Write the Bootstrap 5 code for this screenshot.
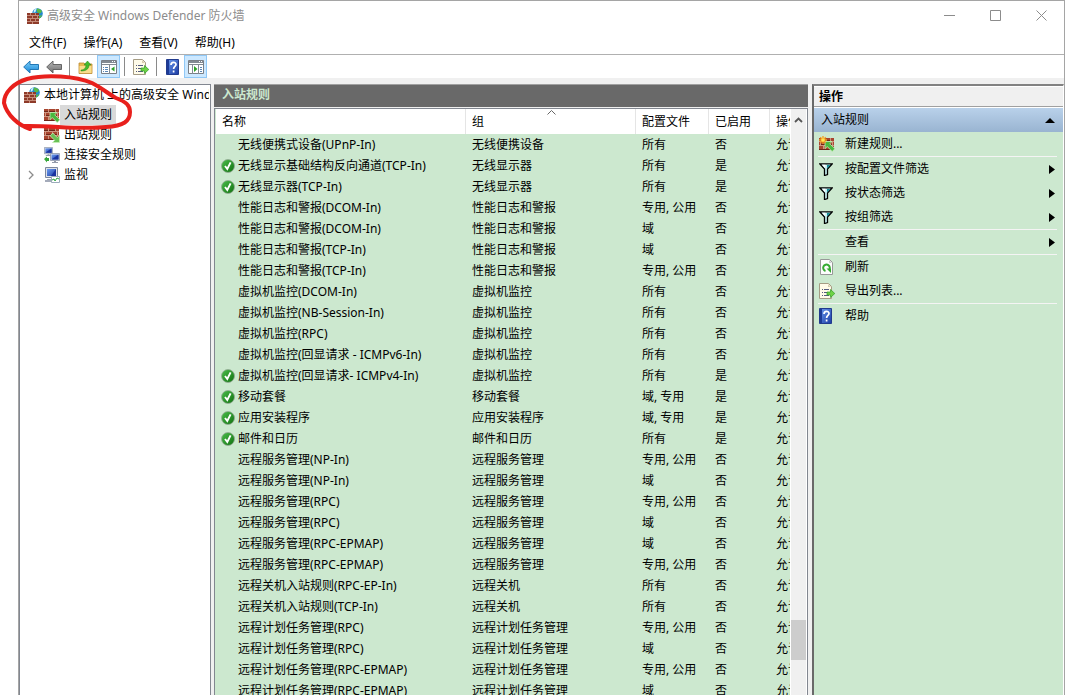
<!DOCTYPE html>
<html lang="zh-CN">
<head>
<meta charset="utf-8">
<meta name="viewport" content="width=device-width, initial-scale=1">
<title>高级安全 Windows Defender 防火墙</title>
<link href="https://cdn.jsdelivr.net/npm/bootstrap@5.3.0/dist/css/bootstrap.min.css" rel="stylesheet">
<style>
body{font:12px/20px "Noto Sans","Noto Sans CJK SC",sans-serif;color:#000;background:#fff}
button{font:inherit;color:inherit;background:none;border:0;padding:0;text-align:left}
svg{flex:none;display:block}
.app-window{margin:0 1px 0 18px;border:1px solid #a5a5a5;border-bottom:0;background:#f0f0f0}
.title-bar{height:30px;background:#fff;color:#8c8c8c}
.title-bar button{width:46px;height:28px}
.menu-row{height:25px;background:#fff;border-bottom:1px solid #b0b0b0;gap:17px;padding:0 10px}
.tool-row{height:23px;background:#fff}
.tool-row button{width:23px;height:23px}
.tool-row .is-on{background:#cce8ff;border:1px solid #90c8f6}
.tool-sep{width:1px;height:19px;background:#8a8a8a}
.panes{margin-top:6px;gap:3px}
.tree-pane{width:192px;background:#fff;border:1px solid #828790;border-bottom:0;overflow:hidden;padding-right:1px}
.tree-pane button{height:20px;white-space:nowrap}
.tree-pane .picked{background:#d9d9d9}
.pane-head{height:23px;background:#696969;color:#cce8cf;border-top:1px solid #a0a0a0}
.list-box{margin-top:1px;border:1px solid #828790;border-width:1px 1px 0;background:#cce8cf;padding-left:1px}
.rules{table-layout:fixed;width:100%;border-collapse:separate;border-spacing:0}
.rules th{height:25px;font-weight:400;background:#fff;border-right:1px solid #e5e5e5;position:relative}
.rules th:last-child{border-right:0}
.rules td{height:21px;line-height:21px}
.rules th,.rules td{padding:0 0 0 6px;overflow:hidden;white-space:nowrap}
.rules td:first-child{padding-left:5px}
.c-group{width:170px}.c-profile{width:73px}.c-enabled{width:61px}.c-action{width:20px}
.sort-mark{position:absolute;top:1px;left:81px}
.mark-box{width:17px;flex:none}
.scroll-track{width:17px;background:#f0f0f0;border-left:1px solid #fff;border-right:1px solid #fff}
.scroll-thumb{height:40px;background:#cdcdcd;margin-bottom:35px}
.act-pane{width:252px;margin-left:1px;border-left:2px solid #696969;border-top:2px solid #828282;border-right:1px solid #fff;background:#cce8cf}
.act-title{height:21px;background:#f0f0f0;border-bottom:1px solid #a0a0a0;font-weight:700;padding-left:5px;border-top:1px solid #fff}
.act-group{height:25px;background:linear-gradient(#b9d1ea,#99b4d1);padding:0 8px 0 7px;border-top:1px solid #fff}
.act-list{padding:0 6px 0 4px}
.act-list button{height:24px;width:100%;gap:10px;padding:0 2px 0 1px}
.act-list hr{margin:0;border:0;border-top:1px solid #f4f4f4;opacity:1}
.act-icon{width:16px;flex:none}
.red-loop{left:0;top:71px;pointer-events:none}
</style>
<script src="https://cdn.jsdelivr.net/npm/bootstrap@5.3.0/dist/js/bootstrap.bundle.min.js"></script>
</head>
<body class="position-relative overflow-hidden">
<svg width="0" height="0" class="position-absolute" aria-hidden="true">
<defs>
<linearGradient id="gBlue" x1="0" y1="0" x2="1" y2="1"><stop stop-color="#6c9cf0"/><stop offset="1" stop-color="#1c3ca4"/></linearGradient>
<linearGradient id="gGreen" x1="0" y1="0" x2="1" y2="1"><stop stop-color="#4cbf4c"/><stop offset="1" stop-color="#0f6f0f"/></linearGradient>
<linearGradient id="gSky" x1="0" y1="0" x2="0" y2="1"><stop stop-color="#7fd0f8"/><stop offset="1" stop-color="#1585d8"/></linearGradient>
<linearGradient id="gGrey" x1="0" y1="0" x2="0" y2="1"><stop stop-color="#b8b8b8"/><stop offset="1" stop-color="#6e6e6e"/></linearGradient>
<symbol id="bricks" viewBox="0 0 15 12"><path fill="#a8452f" d="M0 0h15v12H0z"/><path stroke="#cf9580" fill="none" d="M0 3.5h15M0 7.5h15M4.500 0v3M11.500 0v3M1.500 4v3M8.500 4v3M13.500 4v3M4.500 8v4M11.500 8v4"/><path stroke="#6e2618" fill="none" d="M0 2.500h4M5 2.500h6M2 6.500h6M9 6.500h4M0 11.500h15"/></symbol>
<symbol id="wall" viewBox="0 0 16 16"><circle cx="10.500" cy="5.500" r="5.300" fill="#2187cf"/><path fill="#58b947" d="M10 .6c2 0 4 1 5 2.600-1 1-1 2.600-2.600 2.300C11 5 9 4 10 .6zM12 8l3-1c-.4 1.600-1.500 3-3 3.500z"/><path fill="#c8eefa" d="M7 2c1-.9 2-1.300 2.600-1.200L8.500 4 6.500 5z"/><g transform="translate(0 5)"><path fill="#8e3a29" d="M0 0h12v11H0z"/><path stroke="#c48a78" fill="none" d="M0 2.500h12M0 5.500h12M0 8.500h12M3.500 0v2M8.500 0v2M5.500 3v2M10.500 3v2M3.500 6v2M8.500 6v2M5.500 9v2"/></g></symbol>
<symbol id="inbound" viewBox="0 0 16 16"><use href="#bricks" y="2" width="15" height="12"/><path fill="#49b83e" stroke="#c5efb6" stroke-width=".8" d="M6 5.500h7l-2.200 2.200 5 5-2.600 2.800-5-5L6 12.800z"/></symbol>
<symbol id="outbound" viewBox="0 0 16 16"><use href="#bricks" y="1" width="15" height="12"/><path fill="#69c155" stroke="#c5efb6" stroke-width=".8" d="M15.500 15.500h-7l2.200-2.200-4.500-4.500L8.800 6l4.500 4.500 2.200-2.200z"/></symbol>
<symbol id="newrule" viewBox="0 0 16 16"><use href="#inbound"/><path stroke="#f5a01c" stroke-width="1.300" d="M4 0v8M0 4h8M1.200 1.200l5.600 5.600M6.800 1.200L1.200 6.800"/><circle cx="4" cy="4" r="1.800" fill="#ffe458"/></symbol>
<symbol id="screen" viewBox="0 0 10 10"><path fill="#dde1ea" stroke="#7d879d" stroke-width=".7" d="M.5.5h9v7h-9z"/><path fill="url(#gBlue)" d="M1.500 1.500h7v5h-7z"/><path fill="#1933a0" d="M8.500 1.500v5h-7z"/><path fill="#939aaa" d="M4 8h2v1h2v1H2V9h2z"/></symbol>
<symbol id="connsec" viewBox="0 0 16 16"><use href="#screen" width="9" height="9"/><use href="#screen" x="6" y="6" width="10" height="10"/><path fill="#37a83a" d="M0 12l3-2.500V11h2v3H3v1.500z"/></symbol>
<symbol id="monitor" viewBox="0 0 16 16"><path fill="#dde1ea" stroke="#7d879d" d="M1.500.5h12v10h-12z"/><path fill="url(#gBlue)" d="M3 2h9v7H3z"/><path fill="#1933a0" d="M12 2v7H7z"/><path fill="#a4abba" d="M3 12h7v1h2v2H1v-2h2z"/><path fill="#fff" stroke="#9babbb" d="M7.500 9.500h8v6h-8z"/><path fill="none" stroke="#2ca83e" d="M8 13l2-1 1 2 2-3 2 1"/></symbol>
<symbol id="check" viewBox="0 0 14 14"><circle cx="7" cy="7" r="6.500" fill="url(#gGreen)" stroke="#95a995" stroke-width=".8"/><path fill="none" stroke="#fff" stroke-width="1.900" d="M4 7l2.300 3L9.600 3.300"/></symbol>
<symbol id="arrow" viewBox="0 0 16 14"><path stroke-width="1" d="M.7 7L7 1v3.500h8.500v5H7V13z"/></symbol>
<symbol id="folder" viewBox="0 0 16 16"><path fill="#e9b94f" stroke="#bd8c34" stroke-width=".8" d="M1 4h5l1 1h7v9.500H1z"/><path fill="#f9dd8d" d="M1.500 7h12v7h-12z"/><path fill="#45bb2c" stroke="#278218" stroke-width=".5" d="M3 11c3 0 5-2 5-5H6l3.500-4L13 6h-2c0 4-3 6-8 6z"/></symbol>
<symbol id="pane" viewBox="0 0 16 14"><path fill="#fff" stroke="#7a7f86" d="M.5.5h15v13H.5z"/><path fill="#838a92" d="M1 1h14v2H1zM1 4h14v1H1zM8 5h1v9H8z"/><path fill="#fff" d="M11 1h1v1h-1zM13 1h1v1h-1z"/><path stroke="#5b87b5" d="M2 7.500h1M4 7.500h3M2 9.500h1M4 9.500h3M2 11.500h1M4 11.500h3"/><path fill="#2da128" d="M13.500 6.500v5L10 9z"/></symbol>
<symbol id="pane2" viewBox="0 0 16 14"><path fill="#fff" stroke="#7a7f86" d="M.5.5h15v13H.5z"/><path fill="#838a92" d="M1 1h14v2H1zM1 4h14v1H1zM10 5h1v9h-1zM4 5h1v9H4z"/><path fill="#fff" d="M11 1h1v1h-1zM13 1h1v1h-1z"/><path stroke="#5b87b5" d="M12 7.500h2M12 9.500h2M12 11.500h2"/><path fill="#2da128" d="M6 6v6l3.500-3z"/></symbol>
<symbol id="export" viewBox="0 0 16 16"><path fill="#fffbe8" stroke="#a59c84" d="M.5.5h9l3 3v12H.5z"/><path fill="#d7cdaf" d="M9 1v3h3z"/><path stroke="#555b80" d="M3 6.500h1M5 6.500h5M3 9.500h1M5 9.500h4M3 12.500h1M5 12.500h5"/><path fill="#6ed346" stroke="#2f9c26" stroke-width=".7" d="M8 9h3.500V6.500l4.300 4-4.300 4V12H8z"/></symbol>
<symbol id="help" viewBox="0 0 13 16"><path fill="url(#gBlue)" stroke="#223b8e" d="M.5.5h12v15H.5z"/><path fill="#1d3b96" d="M1 1h2v14H1z"/><path fill="none" stroke="#fff" stroke-width="1.700" d="M5 6c0-3.500 5-3.500 5-.5C10 7.500 7.600 7.500 7.600 10M7.600 11.500v2"/></symbol>
<symbol id="funnel" viewBox="0 0 14 13"><path fill="#c8f1f3" stroke="#000" stroke-width="1.300" d="M.8.8h12.400L8.500 6v5.500l-3 1V6z"/><path fill="#168d98" d="M8 2h3.500L8 5.500z"/><path fill="#fff" d="M3 1.700h3.500L6 5z"/></symbol>
<symbol id="refresh" viewBox="0 0 13 16"><path fill="#fcfcfc" stroke="#989898" d="M.5.5h9l3 3v12H.5z"/><path fill="#ccc" d="M9 1v3h3z"/><path fill="none" stroke="#35aa31" stroke-width="2" d="M5.500 12A3.300 3.300 0 1 1 9 11"/><path fill="#35aa31" d="M6.500 9.500H11V14z"/></symbol>
</defs></svg>

<div class="app-window vh-100 d-flex flex-column overflow-hidden">
  <header class="title-bar d-flex align-items-center ps-2">
    <svg width="16" height="16"><use href="#wall"/></svg><span class="ms-1 me-auto">高级安全 Windows Defender 防火墙</span>
    <button class="d-flex align-items-center justify-content-center" aria-label="最小化"><svg width="11" height="11"><path stroke="#8c8c8c" d="M0 5.500h11"/></svg></button>
    <button class="d-flex align-items-center justify-content-center" aria-label="最大化"><svg width="11" height="11"><path fill="none" stroke="#8c8c8c" d="M.5.5h10v10H.5z"/></svg></button>
    <button class="d-flex align-items-center justify-content-center" aria-label="关闭"><svg width="11" height="11"><path stroke="#8c8c8c" d="M.5.5l10 10M10.500.5l-10 10"/></svg></button>
  </header>
  <nav class="menu-row d-flex align-items-center">
    <button>文件(F)</button><button>操作(A)</button><button>查看(V)</button><button>帮助(H)</button>
  </nav>
  <div class="tool-row d-flex align-items-center ps-0" role="toolbar">
    <button class="d-flex align-items-center justify-content-center" aria-label="后退"><svg width="16" height="14" fill="url(#gSky)" stroke="#2377b5"><use href="#arrow"/></svg></button>
    <button class="d-flex align-items-center justify-content-center" aria-label="前进"><svg width="16" height="14" fill="url(#gGrey)" stroke="#656565"><use href="#arrow"/></svg></button>
    <span class="tool-sep mx-1"></span>
    <button class="d-flex align-items-center justify-content-center" aria-label="上移一级"><svg width="16" height="16"><use href="#folder"/></svg></button>
    <button class="is-on d-flex align-items-center justify-content-center" aria-label="显示控制台树"><svg width="16" height="14"><use href="#pane"/></svg></button>
    <span class="tool-sep mx-1"></span>
    <button class="d-flex align-items-center justify-content-center" aria-label="导出列表"><svg width="16" height="16"><use href="#export"/></svg></button>
    <span class="tool-sep ms-1"></span>
    <button class="d-flex align-items-center justify-content-center ms-1" aria-label="帮助"><svg width="13" height="16"><use href="#help"/></svg></button>
    <button class="is-on d-flex align-items-center justify-content-center" aria-label="显示操作窗格"><svg width="16" height="14"><use href="#pane2"/></svg></button>
  </div>

  <div class="panes d-flex flex-grow-1 overflow-hidden">
    <nav class="tree-pane flex-shrink-0 d-flex flex-column">
      <button class="d-flex align-items-center gap-1 ps-1"><svg width="16" height="16"><use href="#wall"/></svg><span class="overflow-hidden">本地计算机 上的高级安全 Wind</span></button>
      <button class="d-flex align-items-center ps-4"><svg width="16" height="16"><use href="#inbound"/></svg><span class="picked px-1">入站规则</span></button>
      <button class="d-flex align-items-center ps-4"><svg width="16" height="16"><use href="#outbound"/></svg><span class="px-1">出站规则</span></button>
      <button class="d-flex align-items-center ps-4"><svg width="16" height="16"><use href="#connsec"/></svg><span class="px-1">连接安全规则</span></button>
      <button class="d-flex align-items-center ps-2"><svg width="16" height="10"><path fill="none" stroke="#8c8c8c" stroke-width="1.300" d="M1 1l4 4-4 4"/></svg><svg width="16" height="16"><use href="#monitor"/></svg><span class="px-1">监视</span></button>
    </nav>

    <main class="flex-grow-1 d-flex flex-column overflow-hidden">
      <div class="pane-head ps-2 fw-bold">入站规则</div>
      <div class="list-box d-flex flex-grow-1 overflow-hidden">
        <div class="flex-grow-1 overflow-hidden">
          <table class="rules">
            <colgroup><col><col class="c-group"><col class="c-profile"><col class="c-enabled"><col class="c-action"></colgroup>
            <thead><tr><th>名称</th><th>组<svg class="sort-mark" width="9" height="5"><path fill="none" stroke="#666" d="M.5 4.500l4-4 4 4"/></svg></th><th>配置文件</th><th>已启用</th><th>操作</th></tr></thead>
            <tbody id="ruleRows"></tbody>
          </table>
        </div>
        <div class="scroll-track d-flex flex-column justify-content-between flex-shrink-0">
          <svg class="mx-auto mt-2" width="9" height="6"><path fill="none" stroke="#555" stroke-width="1.800" d="M1 5l3.500-3.500L8 5"/></svg>
          <div class="scroll-thumb"></div>
        </div>
      </div>
    </main>

    <aside class="act-pane flex-shrink-0">
      <div class="act-title">操作</div>
      <div class="act-group d-flex align-items-center justify-content-between"><span>入站规则</span><svg width="10" height="5"><path d="M0 5l5-5 5 5z"/></svg></div>
      <div class="act-list">
        <button class="d-flex align-items-center"><span class="act-icon"><svg width="16" height="16"><use href="#newrule"/></svg></span>新建规则...</button>
        <hr>
        <button class="d-flex align-items-center"><span class="act-icon"><svg width="14" height="13"><use href="#funnel"/></svg></span><span class="me-auto">按配置文件筛选</span><svg width="6" height="9"><path d="M0 0l6 4.500L0 9z"/></svg></button>
        <button class="d-flex align-items-center"><span class="act-icon"><svg width="14" height="13"><use href="#funnel"/></svg></span><span class="me-auto">按状态筛选</span><svg width="6" height="9"><path d="M0 0l6 4.500L0 9z"/></svg></button>
        <button class="d-flex align-items-center"><span class="act-icon"><svg width="14" height="13"><use href="#funnel"/></svg></span><span class="me-auto">按组筛选</span><svg width="6" height="9"><path d="M0 0l6 4.500L0 9z"/></svg></button>
        <hr>
        <button class="d-flex align-items-center"><span class="act-icon"></span><span class="me-auto">查看</span><svg width="6" height="9"><path d="M0 0l6 4.500L0 9z"/></svg></button>
        <hr>
        <button class="d-flex align-items-center"><span class="act-icon"><svg width="15" height="16"><use href="#refresh"/></svg></span>刷新</button>
        <button class="d-flex align-items-center"><span class="act-icon"><svg width="16" height="16"><use href="#export"/></svg></span>导出列表...</button>
        <hr>
        <button class="d-flex align-items-center"><span class="act-icon"><svg width="13" height="16"><use href="#help"/></svg></span>帮助</button>
      </div>
    </aside>
  </div>
</div>

<!-- hand-drawn loop around the inbound rules node -->
<svg class="red-loop position-absolute" width="140" height="65" viewBox="0 70 140 65"><path fill="none" stroke="#e8201c" stroke-width="4" stroke-linecap="round" stroke-linejoin="round" d="M30 128C18 124 7 114 4 102C4 91 14 82 27 78C46 73 76 75 92 82C104 88 108 93 116 97C126 101 130 104 130 111C130 120 124 125 106 126C78 129 50 124 23 125"/></svg>

<script>
const rules = [
  ["无线便携式设备(UPnP-In)","无线便携设备","所有",0],
  ["无线显示基础结构反向通道(TCP-In)","无线显示器","所有",1],
  ["无线显示器(TCP-In)","无线显示器","所有",1],
  ["性能日志和警报(DCOM-In)","性能日志和警报","专用, 公用",0],
  ["性能日志和警报(DCOM-In)","性能日志和警报","域",0],
  ["性能日志和警报(TCP-In)","性能日志和警报","域",0],
  ["性能日志和警报(TCP-In)","性能日志和警报","专用, 公用",0],
  ["虚拟机监控(DCOM-In)","虚拟机监控","所有",0],
  ["虚拟机监控(NB-Session-In)","虚拟机监控","所有",0],
  ["虚拟机监控(RPC)","虚拟机监控","所有",0],
  ["虚拟机监控(回显请求 - ICMPv6-In)","虚拟机监控","所有",0],
  ["虚拟机监控(回显请求- ICMPv4-In)","虚拟机监控","所有",1],
  ["移动套餐","移动套餐","域, 专用",1],
  ["应用安装程序","应用安装程序","域, 专用",1],
  ["邮件和日历","邮件和日历","所有",1],
  ["远程服务管理(NP-In)","远程服务管理","专用, 公用",0],
  ["远程服务管理(NP-In)","远程服务管理","域",0],
  ["远程服务管理(RPC)","远程服务管理","专用, 公用",0],
  ["远程服务管理(RPC)","远程服务管理","域",0],
  ["远程服务管理(RPC-EPMAP)","远程服务管理","域",0],
  ["远程服务管理(RPC-EPMAP)","远程服务管理","专用, 公用",0],
  ["远程关机入站规则(RPC-EP-In)","远程关机","所有",0],
  ["远程关机入站规则(TCP-In)","远程关机","所有",0],
  ["远程计划任务管理(RPC)","远程计划任务管理","专用, 公用",0],
  ["远程计划任务管理(RPC)","远程计划任务管理","域",0],
  ["远程计划任务管理(RPC-EPMAP)","远程计划任务管理","专用, 公用",0],
  ["远程计划任务管理(RPC-EPMAP)","远程计划任务管理","域",0]
];
document.getElementById("ruleRows").innerHTML = rules.map(([name, group, profile, on]) =>
  `<tr><td><div class="d-flex align-items-center"><span class="mark-box">${on ? '<svg width="14" height="14"><use href="#check"/></svg>' : ''}</span><span>${name}</span></div></td><td>${group}</td><td>${profile}</td><td>${on ? "是" : "否"}</td><td>允许</td></tr>`).join("");
</script>
</body>
</html>
